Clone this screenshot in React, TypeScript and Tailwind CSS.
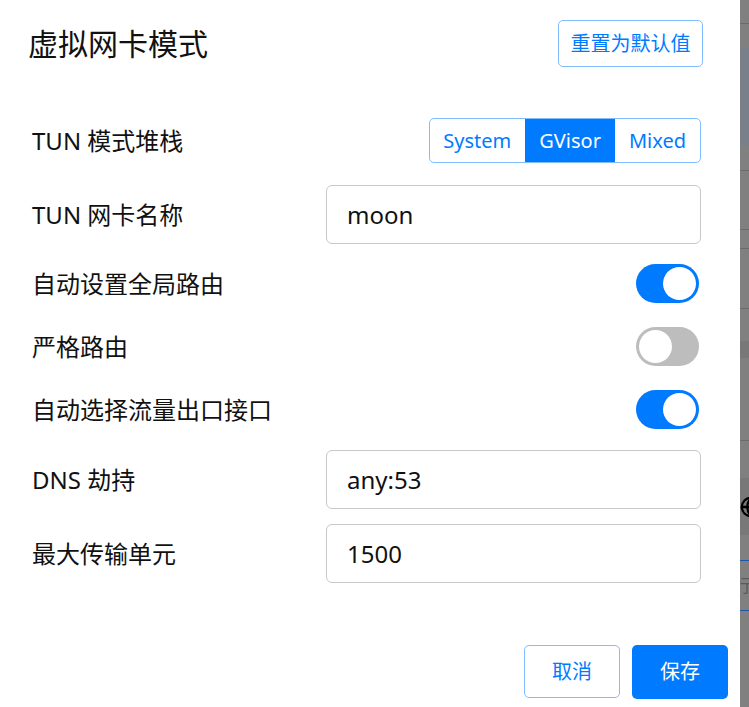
import React, { useState } from 'react';
import { Globe } from 'lucide-react';

const font = { fontFamily: '"Noto Sans", "Noto Sans CJK SC", sans-serif' };

function Toggle({ on, onChange }: { on: boolean; onChange: () => void }) {
    return (
        <button
            type="button"
            onClick={onChange}
            className={`mr-[2px] flex items-center w-[63px] h-[39px] rounded-full p-[3px] ${on ? 'bg-[#007bff] justify-end' : 'bg-[#bdbdbd] justify-start'}`}
        >
            <span className="block w-[33px] h-[33px] rounded-full bg-white" />
        </button>
    );
}

function TextRow({ label, value, className }: { label: string; value: string; className?: string }) {
    return (
        <div className={`flex items-center ${className || ''}`}>
            <div className="w-[294px] shrink-0 text-[24px] text-[#111]">{label}</div>
            <input
                defaultValue={value}
                className="flex-1 min-w-0 h-[59px] border border-[#c8c8c8] rounded-[6px] px-[20px] text-[24px] text-[#111] outline-none"
                style={font}
            />
        </div>
    );
}

function Backdrop() {
    // dimmed page behind the dialog, only a thin strip shows
    return (
        <div className="w-[9px] h-[707px] overflow-hidden bg-[#808080] flex flex-col shrink-0">
            <div className="h-[23px]" />
            <div className="h-px bg-[#6b6b6b]" />
            <div className="h-[24px]" />
            <div className="h-[98px] bg-[#7a8089]" />
            <div className="h-[24px]" />
            <div className="h-px bg-[#6b6b6b]" />
            <div className="h-[58px]" />
            <div className="h-px bg-[#6b6b6b]" />
            <div className="h-[18px]" />
            <div className="h-px bg-[#6b6b6b]" />
            <div className="h-[59px]" />
            <div className="h-px bg-[#6b6b6b]" />
            <div className="h-[32px]" />
            <div className="h-[17px] bg-[#787878]" />
            <div className="h-[82px]" />
            <div className="h-px bg-[#6b6b6b]" />
            <div className="h-[37px]" />
            <div className="h-[57px] bg-[#787878] flex items-center">
                <Globe size={22} strokeWidth={2.5} className="shrink-0 text-black" />
            </div>
            <div className="h-[25px]" />
            <div className="h-px bg-[#1f55a8]" />
            <div className="h-[49px] flex items-center overflow-hidden">
                <span className="shrink-0 -ml-[6px] text-[17px] text-[#5a5a5a] whitespace-nowrap">行政</span>
            </div>
            <div className="h-px bg-[#1f55a8]" />
        </div>
    );
}

export default function App() {
    const [stack, setStack] = useState('GVisor');
    const [autoRoute, setAutoRoute] = useState(true);
    const [strictRoute, setStrictRoute] = useState(false);
    const [autoDetect, setAutoDetect] = useState(true);

    const stacks = ['System', 'GVisor', 'Mixed'];

    return (
        <div className="flex w-[749px] h-[707px] overflow-hidden" style={font}>
            <div className="w-[740px] h-[707px] bg-white flex flex-col shrink-0">
                <div className="mt-[20px] pl-[28px] pr-[37px] flex items-center justify-between">
                    <h2 className="text-[30px] text-[#111] leading-none">虚拟网卡模式</h2>
                    <button
                        type="button"
                        className="w-[145px] h-[47px] border border-[#80bdff] rounded-[5px] text-[20px] text-[#007bff]"
                    >
                        重置为默认值
                    </button>
                </div>

                <div className="pl-[32px] pr-[39px] flex flex-col">
                    <div className="mt-[51px] flex items-center justify-between">
                        <div className="text-[24px] text-[#111]">TUN 模式堆栈</div>
                        <div className="flex h-[45px] border border-[#80bdff] rounded-[5px] overflow-hidden">
                            {stacks.map((s) => (
                                <button
                                    key={s}
                                    type="button"
                                    onClick={() => setStack(s)}
                                    className={`px-[14px] text-[20px] ${stack === s ? 'bg-[#007bff] text-white' : 'text-[#007bff]'} ${s === 'System' ? 'pl-[13px]' : ''}`}
                                >
                                    {s}
                                </button>
                            ))}
                        </div>
                    </div>

                    <TextRow label="TUN 网卡名称" value="moon" className="mt-[22px]" />

                    <div className="mt-[8px] h-[63px] flex items-center justify-between">
                        <div className="text-[24px] text-[#111]">自动设置全局路由</div>
                        <Toggle on={autoRoute} onChange={() => setAutoRoute(!autoRoute)} />
                    </div>
                    <div className="h-[63px] flex items-center justify-between">
                        <div className="text-[24px] text-[#111]">严格路由</div>
                        <Toggle on={strictRoute} onChange={() => setStrictRoute(!strictRoute)} />
                    </div>
                    <div className="h-[63px] flex items-center justify-between">
                        <div className="text-[24px] text-[#111]">自动选择流量出口接口</div>
                        <Toggle on={autoDetect} onChange={() => setAutoDetect(!autoDetect)} />
                    </div>

                    <TextRow label="DNS 劫持" value="any:53" className="mt-[9px]" />
                    <TextRow label="最大传输单元" value="1500" className="mt-[15px]" />
                </div>

                <div className="mt-[62px] pr-[12px] flex justify-end gap-[12px]">
                    <button
                        type="button"
                        className="w-[96px] h-[53px] border border-[#80bdff] rounded-[5px] text-[20px] text-[#007bff]"
                    >
                        取消
                    </button>
                    <button
                        type="button"
                        className="w-[96px] h-[54px] bg-[#007bff] rounded-[5px] text-[20px] text-white"
                    >
                        保存
                    </button>
                </div>
            </div>
            <Backdrop />
        </div>
    );
}
